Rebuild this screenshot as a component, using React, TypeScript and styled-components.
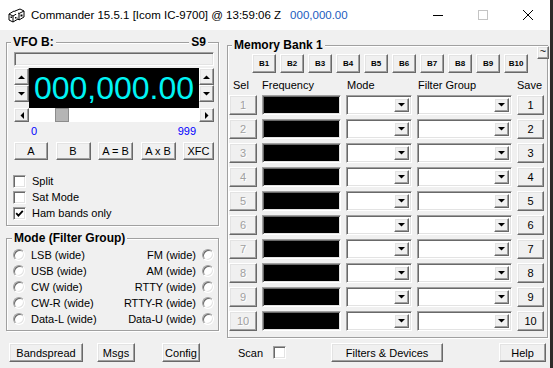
import styled, { createGlobalStyle, css } from "styled-components";

const GlobalStyle = createGlobalStyle`
  html, body {
    margin: 0;
    padding: 0;
    background: #2e2b29;
  }
  body {
    font-family: "Liberation Sans", Arial, sans-serif;
    font-size: 11px;
    color: #000000;
  }
  * {
    box-sizing: border-box;
  }
`;

const raised = css`
  border: 1px solid;
  border-color: #ffffff #696969 #696969 #ffffff;
  box-shadow: inset -1px -1px 0 #a0a0a0, inset 1px 1px 0 #e3e3e3;
  background: #f0f0f0;
`;

const sunken = css`
  border: 1px solid;
  border-color: #a0a0a0 #ffffff #ffffff #a0a0a0;
  box-shadow: inset 1px 1px 0 #696969, inset -1px -1px 0 #e3e3e3;
`;

type Dir = "up" | "down" | "left" | "right";

const triPoints: Record<Dir, string> = {
  up: "0,4 7,4 3.5,0.5",
  down: "0,0 7,0 3.5,3.5",
  left: "4,0 4,7 0.5,3.5",
  right: "0,0 0,7 3.5,3.5",
};

function Tri({ dir }: { dir: Dir }) {
  const flat = dir === "up" || dir === "down";
  return (
    <svg width={flat ? 7 : 4} height={flat ? 4 : 7} viewBox={flat ? "0 0 7 4" : "0 0 4 7"}>
      <polygon points={triPoints[dir]} fill="#000" />
    </svg>
  );
}

function Check() {
  return (
    <svg width="9" height="9" viewBox="0 0 9 9">
      <path d="M1.2 4.2 L3.4 6.6 L7.8 1.8" stroke="#000" strokeWidth="1.8" fill="none" />
    </svg>
  );
}

function AppIcon() {
  return (
    <svg width="17" height="15" viewBox="0 0 17 15">
      <path d="M1 6 L6 3 L10 5 L10 11 L5 14 L1 12 Z" fill="#fff" stroke="#000" />
      <path d="M1 6 L5 8 L10 5 M5 8 L5 14" stroke="#000" fill="none" />
      <path d="M7 3 L12 1 L16 3 L16 9 L11 12 L10 11" fill="#fff" stroke="#000" />
      <path d="M10 5 L11 5.5 L16 3 M11 5.5 L11 12" stroke="#000" fill="none" />
      <rect x="2.5" y="8.5" width="1.5" height="1.5" fill="#000" />
      <rect x="7" y="9" width="1.5" height="1.5" fill="#000" />
      <rect x="12.5" y="6.5" width="2" height="2" fill="#000" />
    </svg>
  );
}

const modes: [string, string][] = [
  ["LSB (wide)", "FM (wide)"],
  ["USB (wide)", "AM (wide)"],
  ["CW (wide)", "RTTY (wide)"],
  ["CW-R (wide)", "RTTY-R (wide)"],
  ["Data-L (wide)", "Data-U (wide)"],
];

const banks = ["B1", "B2", "B3", "B4", "B5", "B6", "B7", "B8", "B9", "B10"];
const rows = [1, 2, 3, 4, 5, 6, 7, 8, 9, 10];

export default function App() {
  return (
    <>
      <GlobalStyle />
      <Window>
        <TitleBar>
          <AppIcon />
          <TitleText>
            Commander 15.5.1 [Icom IC-9700] @ 13:59:06 Z
            <TitleFreq>000,000.00</TitleFreq>
          </TitleText>
          <Controls>
            <CtrlBtn>
              <svg width="10" height="10" viewBox="0 0 10 10">
                <rect x="0" y="5" width="10" height="1" fill="#000" />
              </svg>
            </CtrlBtn>
            <CtrlBtn>
              <svg width="10" height="10" viewBox="0 0 10 10">
                <rect x="0.5" y="0.5" width="9" height="9" fill="none" stroke="#c4c4c4" />
              </svg>
            </CtrlBtn>
            <CtrlBtn>
              <svg width="10" height="10" viewBox="0 0 10 10">
                <path d="M0 0 L10 10 M10 0 L0 10" stroke="#000" strokeWidth="1" />
              </svg>
            </CtrlBtn>
          </Controls>
        </TitleBar>

        <Client>
          <TopArea>
            <LeftCol>
              <Group $pad="0 4px 4px 7px">
                <Caption $ml={-3} $mr={6}>
                  <span>VFO B:</span>
                  <span>S9</span>
                </Caption>
                <SMeter />
                <FreqRow>
                  <SpinCol>
                    <SpinBtn>
                      <Tri dir="up" />
                    </SpinBtn>
                    <SpinBtn>
                      <Tri dir="down" />
                    </SpinBtn>
                  </SpinCol>
                  <FreqDisplay>000,000.00</FreqDisplay>
                  <SpinCol>
                    <SpinBtn>
                      <Tri dir="up" />
                    </SpinBtn>
                    <SpinBtn>
                      <Tri dir="down" />
                    </SpinBtn>
                  </SpinCol>
                </FreqRow>
                <ScrollBar>
                  <ScrollArrow>
                    <Tri dir="left" />
                  </ScrollArrow>
                  <Track>
                    <Thumb $pos={26} />
                  </Track>
                  <ScrollArrow>
                    <Tri dir="right" />
                  </ScrollArrow>
                </ScrollBar>
                <Scale>
                  <span>0</span>
                  <span>999</span>
                </Scale>
                <VfoButtons>
                  <Btn $w={34}>A</Btn>
                  <Btn $w={35}>B</Btn>
                  <Btn $w={35}>A = B</Btn>
                  <Btn $w={35}>A x B</Btn>
                  <Btn $w={31}>XFC</Btn>
                </VfoButtons>
                <CheckList>
                  <CheckRow>
                    <CheckBox />
                    Split
                  </CheckRow>
                  <CheckRow>
                    <CheckBox />
                    Sat Mode
                  </CheckRow>
                  <CheckRow>
                    <CheckBox>
                      <Check />
                    </CheckBox>
                    Ham bands only
                  </CheckRow>
                </CheckList>
              </Group>

              <Group $pad="0 4px 3px 6px" $mt={12}>
                <Caption $ml={-1} $mr={0}>
                  <span>Mode (Filter Group)</span>
                </Caption>
                <ModeGrid>
                  {modes.map(([l, r]) => (
                    <>
                      <ModeItem key={l}>
                        <Radio />
                        {l}
                      </ModeItem>
                      <ModeItem key={r} $right>
                        {r}
                        <Radio />
                      </ModeItem>
                    </>
                  ))}
                </ModeGrid>
              </Group>
            </LeftCol>

            <RightCol>
              <Group $pad="0 2px 6px 1px">
                <Caption $ml={3} $mr={0}>
                  <span>Memory Bank 1</span>
                </Caption>
                <TildeBtn>~</TildeBtn>
                <BankRow>
                  {banks.map((b) => (
                    <BankBtn key={b}>{b}</BankBtn>
                  ))}
                </BankRow>
                <MemHeader>
                  <HeadLabel $pl={4}>Sel</HeadLabel>
                  <HeadLabel>Frequency</HeadLabel>
                  <HeadLabel $pl={1}>Mode</HeadLabel>
                  <HeadLabel $pl={1}>Filter Group</HeadLabel>
                  <HeadLabel>Save</HeadLabel>
                </MemHeader>
                <MemRows>
                  {rows.map((n) => (
                    <MemRow key={n}>
                      <SelBtn>{n}</SelBtn>
                      <FreqBox />
                      <Combo>
                        <DropBtn>
                          <Tri dir="down" />
                        </DropBtn>
                      </Combo>
                      <Combo>
                        <DropBtn>
                          <Tri dir="down" />
                        </DropBtn>
                      </Combo>
                      <SaveBtn>{n}</SaveBtn>
                    </MemRow>
                  ))}
                </MemRows>
              </Group>
            </RightCol>
          </TopArea>

          <BottomBar>
            <Btn $w={74} $h={19} $ml={3}>
              Bandspread
            </Btn>
            <Btn $w={38} $h={19} $ml={14}>
              Msgs
            </Btn>
            <Btn $w={38} $h={19} $ml={27}>
              Config
            </Btn>
            <ScanLabel>Scan</ScanLabel>
            <CheckBox />
            <Btn $w={112} $h={19} $ml={45}>
              Filters &amp; Devices
            </Btn>
            <Btn $w={47} $h={19} $ml={56}>
              Help
            </Btn>
          </BottomBar>
        </Client>
      </Window>
    </>
  );
}

const Window = styled.div`
  display: flex;
  flex-direction: column;
  width: 550px;
  height: 368px;
  overflow: hidden;
`;

const TitleBar = styled.div`
  display: flex;
  align-items: center;
  height: 30px;
  padding-left: 8px;
  background: #ffffff;
  font-family: "Liberation Sans", Arial, sans-serif;
  font-size: 11.5px;
`;

const TitleText = styled.div`
  flex: 1;
  margin-left: 6px;
  white-space: nowrap;
  color: #000000;
`;

const TitleFreq = styled.span`
  margin-left: 9px;
  color: #1a5cc0;
`;

const Controls = styled.div`
  display: flex;
  height: 30px;
`;

const CtrlBtn = styled.div`
  display: flex;
  align-items: center;
  justify-content: center;
  width: 45px;
  height: 30px;
`;

const Client = styled.div`
  flex: 1;
  display: flex;
  flex-direction: column;
  padding: 12px 0 0 6px;
  background: #f0f0f0;
`;

const TopArea = styled.div`
  display: flex;
  align-items: flex-start;
`;

const LeftCol = styled.div`
  display: flex;
  flex-direction: column;
  width: 213px;
`;

const RightCol = styled.div`
  width: 321px;
  margin: 3px 0 0 8px;
`;

const Group = styled.div<{ $pad: string; $mt?: number }>`
  position: relative;
  margin-top: ${(p) => p.$mt ?? 0}px;
  padding: ${(p) => p.$pad};
  border: 1px solid #a0a0a0;
  box-shadow: inset 1px 1px 0 #ffffff, 1px 1px 0 #ffffff;
`;

const Caption = styled.div<{ $ml: number; $mr: number }>`
  display: flex;
  justify-content: space-between;
  height: 14px;
  margin: -8px ${(p) => p.$mr}px 0 ${(p) => p.$ml}px;
  font-size: 12px;
  font-weight: bold;
  line-height: 14px;

  span {
    padding: 0 2px;
    background: #f0f0f0;
  }
`;

const SMeter = styled.div`
  height: 14px;
  margin-top: 3px;
  background: #f0f0f0;
  ${sunken}
`;

const FreqRow = styled.div`
  display: flex;
  height: 40px;
  margin-top: 2px;
`;

const SpinCol = styled.div`
  display: flex;
  flex-direction: column;
  width: 15px;
  height: 34px;
`;

const SpinBtn = styled.div`
  display: flex;
  flex: 1;
  align-items: center;
  justify-content: center;
  ${raised}
`;

const FreqDisplay = styled.div`
  flex: 1;
  background: #000000;
  color: #00f4f4;
  font-size: 32px;
  line-height: 41px;
  text-align: center;
`;

const ScrollBar = styled.div`
  display: flex;
  height: 14px;
`;

const ScrollArrow = styled.div`
  display: flex;
  align-items: center;
  justify-content: center;
  width: 15px;
  ${raised}
`;

const Track = styled.div`
  flex: 1;
  background: #ffffff;
`;

const Thumb = styled.div<{ $pos: number }>`
  width: 14px;
  height: 14px;
  margin-left: ${(p) => p.$pos}px;
  background: #b5b5b5;
  border: 1px solid #8c8c8c;
`;

const Scale = styled.div`
  display: flex;
  justify-content: space-between;
  height: 14px;
  margin-top: 2px;
  padding: 0 18px 0 17px;
  color: #0000ff;
  line-height: 14px;
`;

const VfoButtons = styled.div`
  display: flex;
  justify-content: space-between;
  margin-top: 4px;
`;

const Btn = styled.button<{ $w: number; $h?: number; $ml?: number }>`
  flex-shrink: 0;
  width: ${(p) => p.$w}px;
  height: ${(p) => p.$h ?? 18}px;
  margin-left: ${(p) => p.$ml ?? 0}px;
  padding: 0;
  font-family: inherit;
  font-size: 11px;
  color: #000000;
  ${raised}
`;

const CheckList = styled.div`
  margin: 13px 0 0 -1px;
`;

const CheckRow = styled.div`
  display: flex;
  align-items: center;
  gap: 6px;
  height: 16px;
`;

const CheckBox = styled.div`
  display: flex;
  flex-shrink: 0;
  align-items: center;
  justify-content: center;
  width: 13px;
  height: 13px;
  background: #ffffff;
  ${sunken}
`;

const ModeGrid = styled.div`
  display: grid;
  grid-template-columns: 1fr 1fr;
  grid-auto-rows: 16px;
  margin-top: 2px;
`;

const ModeItem = styled.div<{ $right?: boolean }>`
  display: flex;
  align-items: center;
  justify-content: ${(p) => (p.$right ? "flex-end" : "flex-start")};
  gap: 6px;
`;

const Radio = styled.div`
  width: 12px;
  height: 12px;
  border-radius: 50%;
  background: #ffffff;
  border: 1px solid;
  border-color: #a0a0a0 #ffffff #ffffff #a0a0a0;
  box-shadow: inset 1px 1px 0 #696969, inset -1px -1px 0 #e3e3e3;
`;

const TildeBtn = styled.div`
  position: absolute;
  top: 0;
  right: -2px;
  width: 12px;
  height: 13px;
  font-size: 11px;
  line-height: 8px;
  text-align: center;
  ${raised}
`;

const BankRow = styled.div`
  display: flex;
  gap: 4px;
  margin-top: 2px;
  padding-left: 23px;
`;

const BankBtn = styled.div`
  width: 24px;
  height: 19px;
  font-size: 8px;
  font-weight: bold;
  line-height: 17px;
  text-align: center;
  ${raised}
`;

const memColumns = css`
  display: grid;
  grid-template-columns: 28px 79px 66px 95px 27px;
  column-gap: 5px;
`;

const MemHeader = styled.div`
  ${memColumns}
  height: 16px;
  margin-top: 4px;
  line-height: 16px;
`;

const HeadLabel = styled.div<{ $pl?: number }>`
  padding-left: ${(p) => p.$pl ?? 0}px;
  white-space: nowrap;
`;

const MemRows = styled.div`
  display: flex;
  flex-direction: column;
  gap: 4px;
  margin-top: 2px;
`;

const MemRow = styled.div`
  ${memColumns}
  height: 20px;
`;

const SelBtn = styled.div`
  font-size: 11px;
  line-height: 18px;
  text-align: center;
  color: #a0a0a0;
  text-shadow: 1px 1px 0 #ffffff;
  ${raised}
`;

const SaveBtn = styled.div`
  font-size: 11px;
  line-height: 18px;
  text-align: center;
  ${raised}
`;

const FreqBox = styled.div`
  background: #000000;
  ${sunken}
`;

const Combo = styled.div`
  display: flex;
  justify-content: flex-end;
  padding: 2px;
  background: #ffffff;
  ${sunken}
`;

const DropBtn = styled.div`
  display: flex;
  align-items: center;
  justify-content: center;
  width: 15px;
  ${raised}
`;

const BottomBar = styled.div`
  display: flex;
  align-items: center;
  height: 19px;
  margin-top: 5px;
`;

const ScanLabel = styled.span`
  margin: 0 10px 0 38px;
`;
